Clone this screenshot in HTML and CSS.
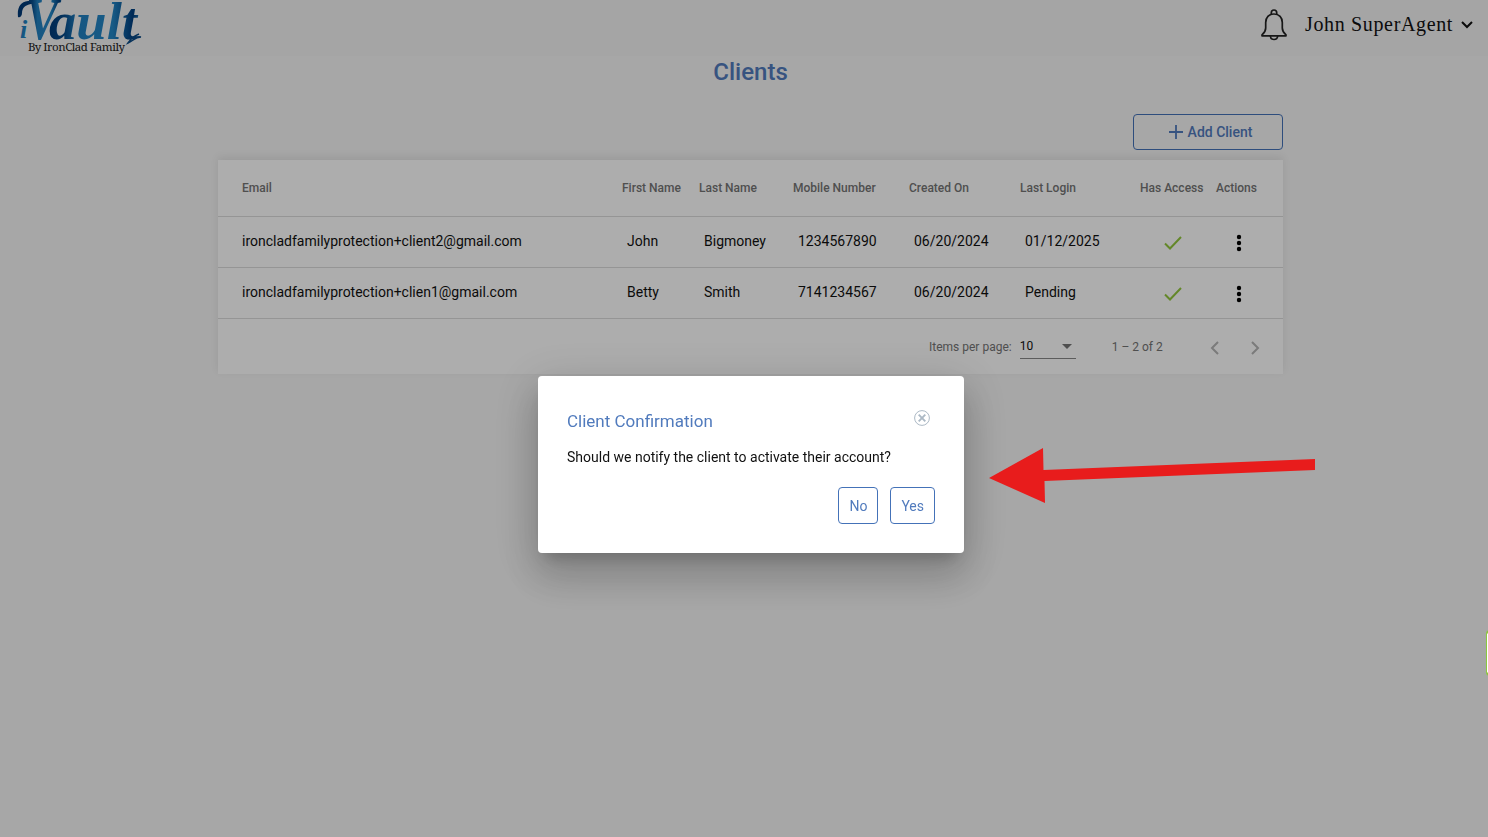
FILE: index.html
```html
<!DOCTYPE html>
<html lang="en">
<head>
  <meta charset="UTF-8">
  <title>iVault - Clients</title>
  <meta name="viewport" content="width=device-width, initial-scale=1.0">
  <link rel="stylesheet" href="styles.css">
</head>
<body>
  <header class="topbar">
    <svg class="logo" width="160" height="57" viewBox="0 0 160 57">
      <defs>
        <linearGradient id="vaultBlue" x1="0" x2="1" y1="0" y2="0">
          <stop offset="0" stop-color="#003a78"/>
          <stop offset="0.17" stop-color="#064b8a"/>
          <stop offset="0.32" stop-color="#2180c0"/>
          <stop offset="0.7" stop-color="#2387c6"/>
          <stop offset="0.93" stop-color="#003d7d"/>
          <stop offset="1" stop-color="#1f70ad"/>
        </linearGradient>
      </defs>
      <text class="logo-i" x="20" y="38">i</text>
      <path d="M18 17C17 8 20 2 28 1l12-2v3l-9 2c-6 1-9 4-9 9 0 3-2 5-4 4z" fill="#003a78"/>
      <text class="logo-v" x="26" y="39" textLength="32" lengthAdjust="spacingAndGlyphs" fill="url(#vaultBlue)">V</text>
      <text class="logo-ault" x="49" y="39" textLength="88" lengthAdjust="spacingAndGlyphs" fill="url(#vaultBlue)">ault</text>
      <path d="M126 38c5 2 9-2 15-1-6 0-8 4-13 6 3-4 4-6 11-9" fill="none" stroke="#0b4b86" stroke-width="1.5"/>
      <text class="logo-sub" x="28" y="51" textLength="97">By IronClad Family</text>
    </svg>
    <div class="user">
      <svg class="bell" width="26" height="32" viewBox="0 0 26 32" fill="none" stroke="#222" stroke-width="1.7" stroke-linejoin="round">
        <path d="M10.3 5.3V3.8C10.3 2 11.4 1 13 1s2.700 1 2.700 2.800v1.500"/>
        <path d="M13 5c-5.200 0-8.300 3.700-8.300 8.500v5.500c0 3-1 4.500-3.700 6.800v1h24v-1c-2.700-2.300-3.700-3.800-3.700-6.800v-5.500C21.300 8.700 18.200 5 13 5z"/>
        <path d="M9.300 27c.2 2.300 1.700 3.500 3.700 3.500s3.500-1.200 3.700-3.500"/>
      </svg>
      <span class="user-name">John SuperAgent</span>
      <svg width="12" height="8" viewBox="0 0 12 8" fill="none" stroke="#111" stroke-width="2"><path d="M1 1l5 5 5-5"/></svg>
    </div>
  </header>

  <main class="page">
    <h1>Clients</h1>
    <div class="toolbar">
      <button class="add-btn">
        <svg width="16" height="16" viewBox="0 0 16 16" stroke="currentColor" stroke-width="1.8"><path d="M8 1v14M1 8h14"/></svg>
        Add Client
      </button>
    </div>

    <div class="card">
      <table class="clients">
        <colgroup>
          <col class="c-email"><col class="c-first"><col class="c-last"><col class="c-mobile"><col class="c-created"><col class="c-login"><col class="c-access"><col>
        </colgroup>
        <thead>
          <tr>
            <th>Email</th><th>First Name</th><th>Last Name</th><th>Mobile Number</th><th>Created On</th><th>Last Login</th><th>Has Access</th><th>Actions</th>
          </tr>
        </thead>
        <tbody>
          <tr>
            <td>ironcladfamilyprotection+client2@gmail.com</td><td>John</td><td>Bigmoney</td><td>1234567890</td><td>06/20/2024</td><td>01/12/2025</td>
            <td class="access"><svg width="18" height="14" viewBox="0 0 18 14" fill="none" stroke="#93c83d" stroke-width="2"><path d="M1 7.500l5 5L17 1"/></svg></td>
            <td class="actions"><svg width="6" height="18" viewBox="0 0 6 18"><circle cx="3" cy="3" r="2.200"/><circle cx="3" cy="9" r="2.200"/><circle cx="3" cy="15" r="2.200"/></svg></td>
          </tr>
          <tr>
            <td>ironcladfamilyprotection+clien1@gmail.com</td><td>Betty</td><td>Smith</td><td>7141234567</td><td>06/20/2024</td><td>Pending</td>
            <td class="access"><svg width="18" height="14" viewBox="0 0 18 14" fill="none" stroke="#93c83d" stroke-width="2"><path d="M1 7.500l5 5L17 1"/></svg></td>
            <td class="actions"><svg width="6" height="18" viewBox="0 0 6 18"><circle cx="3" cy="3" r="2.200"/><circle cx="3" cy="9" r="2.200"/><circle cx="3" cy="15" r="2.200"/></svg></td>
          </tr>
        </tbody>
      </table>
      <div class="paginator">
        <span>Items per page:</span>
        <div class="page-size">10 <svg width="10" height="5" viewBox="0 0 10 5"><path d="M0 0h10L5 5z" fill="#757575"/></svg></div>
        <span class="range">1 – 2 of 2</span>
        <svg class="prev" width="10" height="14" viewBox="0 0 10 14"><path d="M8 1L2 7l6 6"/></svg>
        <svg class="next" width="10" height="14" viewBox="0 0 10 14"><path d="M2 1l6 6-6 6"/></svg>
      </div>
    </div>
  </main>

  <div class="backdrop">
    <div class="dialog">
      <div class="dialog-head">
        <h2>Client Confirmation</h2>
        <svg class="close" width="16" height="16" viewBox="0 0 16 16" fill="none" stroke="#acb9c5"><circle cx="8" cy="8" r="7.400"/><path d="M4.700 4.700l6.600 6.600M11.300 4.700l-6.600 6.600" stroke-width="1.900"/></svg>
      </div>
      <p>Should we notify the client to activate their account?</p>
      <div class="dialog-actions">
        <button>No</button>
        <button class="yes">Yes</button>
      </div>
    </div>
  </div>

  <svg class="arrow" width="328" height="56" viewBox="0 0 328 56"><path d="M0 30L54 0l.5 22L326 11v11L55.500 33l.5 22z" fill="#e81c1c"/></svg>
  <div class="side-tab"></div>
</body>
</html>
```
FILE: styles.css
```css
* {
  box-sizing: border-box;
}

body {
  margin: 0;
  height: 100vh;
  overflow: hidden;
  background: #f6f6f6;
  font-family: Roboto, sans-serif;
  color: #111;
}

.topbar {
  display: flex;
  justify-content: space-between;
  height: 56px;
  background: #f3f3f3;
}

.logo-i {
  font: italic bold 26px "Liberation Serif", serif;
  fill: #2180c0;
}

.logo-v {
  font: italic bold 60px "Liberation Serif", serif;
}

.logo-ault {
  font: italic bold 53px "Liberation Serif", serif;
}

.logo-sub {
  font: 11.5px "Noto Serif", "Liberation Serif", serif;
  fill: #222;
}

.user {
  display: flex;
  align-items: center;
  height: 50px;
  padding-right: 15px;
  font-family: "Liberation Serif", serif;
  font-size: 20px;
}

.user-name {
  width: 150px;
  margin: 0 6px 2px 18px;
  letter-spacing: 0.65px;
  white-space: nowrap;
}

.page {
  width: 1065px;
  margin-left: 218px;
}

h1 {
  margin: 0;
  height: 58px;
  line-height: 32px;
  font-size: 24px;
  font-weight: 500;
  text-align: center;
  color: #517bbd;
}

.toolbar {
  display: flex;
  justify-content: flex-end;
  height: 46px;
}

button {
  height: 37px;
  padding: 0 10px;
  border: 1px solid #4472b8;
  border-radius: 4px;
  background: transparent;
  color: #517bbd;
  font: 14px Roboto, sans-serif;
}

.add-btn {
  display: flex;
  align-items: center;
  justify-content: center;
  gap: 4px;
  width: 150px;
  height: 36px;
  padding-left: 14px;
  font-weight: 500;
}

.card {
  height: 214px;
  background: #fff;
  box-shadow: 0 -3px 8px rgba(0, 0, 0, 0.08);
}

.clients {
  width: 100%;
  table-layout: fixed;
  border-collapse: collapse;
}

.c-email { width: 404px; }
.c-first { width: 77px; }
.c-last { width: 94px; }
.c-mobile { width: 116px; }
.c-created { width: 111px; }
.c-login { width: 120px; }
.c-access { width: 76px; }

th {
  height: 56px;
  padding: 0;
  border-bottom: 1px solid #dcdcdc;
  font-size: 12px;
  font-weight: 500;
  text-align: left;
  color: #757575;
  white-space: nowrap;
}

td {
  height: 51px;
  padding: 0 0 2px 5px;
  border-bottom: 1px solid #dcdcdc;
  font-size: 14px;
  white-space: nowrap;
}

th:first-child,
td:first-child {
  padding-left: 24px;
}

td svg {
  display: block;
}

td.access {
  padding: 2px 0 0 24px;
}

td.actions {
  padding: 2px 0 0 20px;
}

.paginator {
  display: flex;
  align-items: center;
  height: 56px;
  padding-left: 711px;
  font-size: 12px;
  color: #757575;
}

.page-size {
  display: flex;
  align-items: center;
  justify-content: space-between;
  width: 56px;
  height: 25px;
  margin-left: 8px;
  padding-right: 4px;
  border-bottom: 1px solid #888;
  color: #111;
}

.range {
  width: 52px;
  margin-left: 36px;
}

.prev,
.next {
  margin-top: 2px;
  fill: none;
  stroke: #b5b5b5;
  stroke-width: 2;
}

.prev {
  margin-left: 46px;
}

.next {
  margin-left: 30px;
}

.backdrop {
  position: fixed;
  inset: 0;
  padding: 376px 0 0 538px;
  background: rgba(0, 0, 0, 0.32);
}

.dialog {
  width: 426px;
  height: 177px;
  padding: 34px 29px 29px;
  border-radius: 4px;
  background: #fff;
  box-shadow: 0 11px 15px -7px rgba(0, 0, 0, 0.2), 0 24px 38px 3px rgba(0, 0, 0, 0.14), 0 9px 46px 8px rgba(0, 0, 0, 0.12);
}

.dialog-head {
  display: flex;
  justify-content: space-between;
  padding-right: 5px;
}

h2 {
  margin: 0;
  font-size: 17px;
  line-height: 22px;
  font-weight: 400;
  color: #517bbd;
}

.dialog p {
  margin: 15px 0 20px;
  font-size: 14px;
  line-height: 20px;
}

.dialog-actions {
  display: flex;
  justify-content: flex-end;
  gap: 12px;
}

.arrow {
  position: absolute;
  left: 989px;
  top: 448px;
}

.side-tab {
  position: absolute;
  top: 630px;
  right: -30px;
  width: 32px;
  height: 46px;
  border: solid #8cc63f;
  border-width: 3px 1px;
  border-radius: 4px;
  background: #fff;
}
```
